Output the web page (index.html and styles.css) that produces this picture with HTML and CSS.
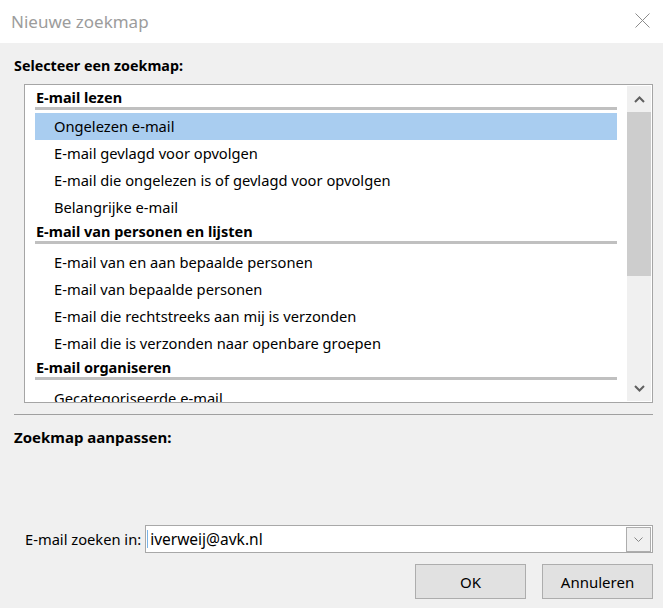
FILE: index.html
```html
<!DOCTYPE html>
<html lang="nl">
<head>
    <meta charset="UTF-8">
    <meta name="viewport" content="width=device-width, initial-scale=1.0">
    <title>Nieuwe zoekmap</title>
    <link rel="stylesheet" href="styles.css">
</head>
<body>
    <div class="dialog">
        <div class="titlebar">
            <span class="title">Nieuwe zoekmap</span>
            <svg class="close" width="15" height="15" viewBox="0 0 15 15">
                <path d="M0.5 0.5 L14.5 14.5 M14.5 0.5 L0.5 14.5" stroke="#8c8c8c" stroke-width="1" fill="none"/>
            </svg>
        </div>

        <div class="content">
            <div class="section-label">Selecteer een zoekmap:</div>

            <div class="listbox">
                <div class="list">
                    <div class="group first">E-mail lezen</div>
                    <div class="item selected">Ongelezen e-mail</div>
                    <div class="item">E-mail gevlagd voor opvolgen</div>
                    <div class="item">E-mail die ongelezen is of gevlagd voor opvolgen</div>
                    <div class="item">Belangrijke e-mail</div>
                    <div class="group">E-mail van personen en lijsten</div>
                    <div class="item">E-mail van en aan bepaalde personen</div>
                    <div class="item">E-mail van bepaalde personen</div>
                    <div class="item">E-mail die rechtstreeks aan mij is verzonden</div>
                    <div class="item">E-mail die is verzonden naar openbare groepen</div>
                    <div class="group">E-mail organiseren</div>
                    <div class="item">Gecategoriseerde e-mail</div>
                </div>
                <div class="scrollbar">
                    <div class="arrow">
                        <svg width="11" height="7" viewBox="0 0 11 7">
                            <path d="M1 6 L5.5 1.5 L10 6" stroke="#606060" stroke-width="2" fill="none"/>
                        </svg>
                    </div>
                    <div class="thumb"></div>
                    <div class="track"></div>
                    <div class="arrow">
                        <svg width="11" height="7" viewBox="0 0 11 7">
                            <path d="M1 1 L5.5 5.5 L10 1" stroke="#606060" stroke-width="2" fill="none"/>
                        </svg>
                    </div>
                </div>
            </div>

            <div class="separator"></div>

            <div class="section-label second">Zoekmap aanpassen:</div>

            <div class="search-row">
                <label class="search-label">E-mail zoeken in:</label>
                <div class="combo">
                    <span class="combo-value">iverweij@avk.nl</span>
                    <div class="combo-button">
                        <svg width="9" height="5" viewBox="0 0 9 5">
                            <path d="M0.5 0.5 L4.5 4.5 L8.5 0.5" stroke="#888" stroke-width="1" fill="none"/>
                        </svg>
                    </div>
                </div>
            </div>

            <div class="buttons">
                <button class="btn">OK</button>
                <button class="btn">Annuleren</button>
            </div>
        </div>
    </div>
</body>
</html>
```

FILE: styles.css
```css
body {
    margin: 0;
    background-color: #f0f0f0;
    font-family: "Noto Sans", "Open Sans", sans-serif;
    font-size: 14.7px;
    color: #000;
    overflow: hidden;
}

.titlebar {
    height: 43px;
    background-color: #fff;
    display: flex;
    align-items: center;
    justify-content: space-between;
    padding: 0 13px 0 11px;
}

.title {
    font-size: 17px;
    color: #9c9c9c;
    margin-top: -1px;
}

.close {
    display: block;
    margin-top: -2px;
}

.content {
    padding: 0 10px 0 14px;
}

.section-label {
    font-weight: bold;
    font-size: 14.3px;
    line-height: 20px;
    margin-top: 13px;
    margin-bottom: 8px;
}

.section-label.second {
    font-size: 15px;
    margin-top: 12px;
    margin-bottom: 0;
}

/* リスト */
.listbox {
    margin-left: 10px;
    height: 317px;
    border: 1px solid #a5a5a5;
    background-color: #fff;
    display: flex;
    overflow: hidden;
}

.list {
    flex: 1;
    padding: 2px 10px 0 10px;
    overflow: hidden;
}

.group {
    font-weight: bold;
    font-size: 14.5px;
    line-height: 20px;
    padding-left: 1px;
    border-bottom: 3px solid #c0c0c0;
    margin-bottom: 5px;
}

.group.first {
    margin-bottom: 3px;
}

.item {
    height: 27px;
    line-height: 27px;
    padding-left: 19px;
    white-space: nowrap;
}

.item.selected {
    background-color: #a9cdf0;
}

.scrollbar {
    width: 24px;
    margin: 1px 1px 1px 0;
    background-color: #f0f0f0;
    display: flex;
    flex-direction: column;
}

.arrow {
    height: 26px;
    display: flex;
    align-items: center;
    justify-content: center;
}

.arrow svg {
    display: block;
}

.thumb {
    height: 164px;
    background-color: #cdcdcd;
}

.track {
    flex: 1;
}

.separator {
    height: 1px;
    background-color: #a0a0a0;
    margin-top: 11px;
}

/* 検索場所 */
.search-row {
    display: flex;
    align-items: center;
    margin-top: 78px;
    padding-left: 11px;
}

.search-label {
    margin-right: 4px;
}

.combo {
    flex: 1;
    height: 26px;
    border: 1px solid #a8a8a8;
    background-color: #fff;
    display: flex;
    align-items: center;
    justify-content: space-between;
}

.combo-value {
    padding-left: 2px;
    border-left: 1px solid #7ab4e8;
    margin-left: 1px;
    line-height: 18px;
    font-size: 15.5px;
}

.combo-button {
    width: 23px;
    height: 23px;
    margin-right: 1px;
    border: 1px solid #adadad;
    background-color: #f0f0f0;
    display: flex;
    align-items: center;
    justify-content: center;
}

.buttons {
    display: flex;
    justify-content: flex-end;
    gap: 16px;
    margin-top: 11px;
}

.btn {
    width: 111px;
    height: 35px;
    background-color: #e1e1e1;
    border: 1px solid #adadad;
    font-family: "Noto Sans", "Open Sans", sans-serif;
    font-size: 15px;
    color: #000;
    padding: 0;
}
```
